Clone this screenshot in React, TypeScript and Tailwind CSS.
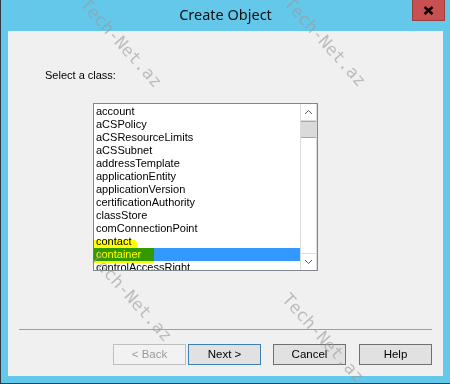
import React from 'react';

const classes = [
  'account',
  'aCSPolicy',
  'aCSResourceLimits',
  'aCSSubnet',
  'addressTemplate',
  'applicationEntity',
  'applicationVersion',
  'certificationAuthority',
  'classStore',
  'comConnectionPoint',
  'contact',
  'container',
  'controlAccessRight',
];

const marks = [
  { left: 'left-[120px]', top: 'top-[43px]' },
  { left: 'left-[324px]', top: 'top-[42px]' },
  { left: 'left-[130px]', top: 'top-[297px]' },
  { left: 'left-[322px]', top: 'top-[338px]' },
];

function Chevron({ up }: { up?: boolean }) {
  return (
    <svg width="9" height="6" viewBox="0 0 9 6">
      <polyline
        points={up ? '1,5 4.5,1.5 8,5' : '1,1 4.5,4.5 8,1'}
        fill="none"
        stroke="#606060"
        strokeWidth="1"
      />
    </svg>
  );
}

function Button({ label, kind }: { label: string; kind: 'disabled' | 'default' | 'normal' }) {
  const look =
    kind === 'disabled'
      ? 'border-[#bfbfbf] bg-[#f2f2f2] text-[#9a9a9a]'
      : kind === 'default'
        ? 'border-[#3c7fb1] bg-[#e1e1e1] text-black'
        : 'border-[#707070] bg-[#e1e1e1] text-black';
  return (
    <div className={`w-[73px] h-[21px] border flex items-center justify-center text-[11.5px] ${look}`}>
      {label}
    </div>
  );
}

export default function App() {
  return (
    <div className="relative w-[450px] h-[384px] overflow-hidden bg-[#63c8e9] border-l border-b border-[#2d3b44] flex flex-col font-['Liberation_Sans',Arial,sans-serif]">
      {/* title bar */}
      <div className="relative h-[31px] flex items-center justify-center">
        <span className="text-[14.5px] text-[#111] font-['Noto_Sans',sans-serif] -mt-[2px]">Create Object</span>
        <div className="absolute right-[5px] top-0 w-[33px] h-[21px] bg-[#c75050] border border-t-0 border-[#9c3c3c] flex items-center justify-center">
          <svg width="11" height="9" viewBox="0 0 11 9">
            <path d="M1.5 1 L9.5 8 M9.5 1 L1.5 8" stroke="#000" strokeWidth="2.4" />
          </svg>
        </div>
      </div>

      {/* body */}
      <div className="mx-[7px] h-[345px] bg-[#f0f0f0] flex flex-col">
        <div className="mt-[38px] ml-[37px] text-[11px] leading-[13px] text-black">Select a class:</div>

        <div className="relative mt-[21px] ml-[85px] w-[225px] h-[168px] border border-[#828790] bg-white flex">
          <div className="flex-1 overflow-hidden pt-[1px]">
            {classes.map((c) => (
              <div
                key={c}
                className={`h-[13px] leading-[13px] pl-[2px] text-[11px] whitespace-nowrap ${
                  c === 'container' ? 'bg-[#3399ff] text-white' : 'text-black'
                }`}
              >
                {c}
              </div>
            ))}
          </div>
          <div className="w-[17px] flex flex-col border-x border-[#dcdcdc] bg-white">
            <div className="h-[17px] border-b border-[#dcdcdc] flex items-center justify-center">
              <Chevron up />
            </div>
            <div className="h-[17px] bg-[#dadada] border-y border-[#a8a8a8]" />
            <div className="flex-1" />
            <div className="h-[17px] border-t border-[#dcdcdc] flex items-center justify-center">
              <Chevron />
            </div>
          </div>
          {/* highlighter marks */}
          <div className="absolute left-[-1px] top-[136px] w-[44px] h-[9px] bg-[#ffff00] mix-blend-multiply rounded-r-[3px]" />
          <div className="absolute left-[-1px] top-[144px] w-[61px] h-[15px] bg-[#ffff00] mix-blend-multiply" />
        </div>

        <div className="mt-[58px] mx-[11px] h-px bg-[#a0a0a0]" />

        <div className="mt-[14px] pr-[11px] flex justify-end">
          <Button label="< Back" kind="disabled" />
          <div className="ml-[2px]">
            <Button label="Next >" kind="default" />
          </div>
          <div className="ml-[12px]">
            <Button label="Cancel" kind="normal" />
          </div>
          <div className="ml-[13px]">
            <Button label="Help" kind="normal" />
          </div>
        </div>
      </div>

      {/* watermarks */}
      {marks.map((m, i) => (
        <span
          key={i}
          className={`absolute ${m.left} ${m.top} -translate-x-1/2 -translate-y-1/2 rotate-[48deg] whitespace-nowrap pointer-events-none font-['DejaVu_Sans_Mono',monospace] text-[17px] leading-none text-[#9a9a9a] opacity-60`}
        >
          Tech-Net.az
        </span>
      ))}
    </div>
  );
}
